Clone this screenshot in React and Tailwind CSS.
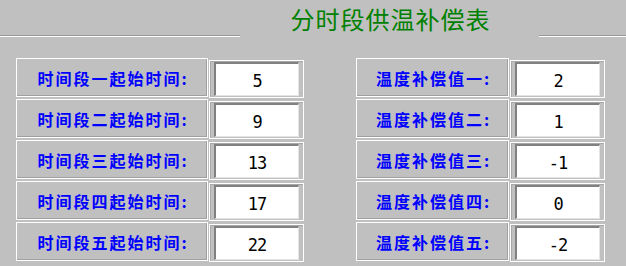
import React from 'react';

const font = { fontFamily: '"Noto Sans CJK SC", "Noto Sans", sans-serif' };

const timeRows = [
    { label: '时间段一起始时间:', value: '5' },
    { label: '时间段二起始时间:', value: '9' },
    { label: '时间段三起始时间:', value: '13' },
    { label: '时间段四起始时间:', value: '17' },
    { label: '时间段五起始时间:', value: '22' },
];

const tempRows = [
    { label: '温度补偿值一:', value: '2' },
    { label: '温度补偿值二:', value: '1' },
    { label: '温度补偿值三:', value: '-1' },
    { label: '温度补偿值四:', value: '0' },
    { label: '温度补偿值五:', value: '-2' },
];

const Row = ({ label, value, labelWidth }) => (
    <div className="flex items-start gap-[1px]">
        <div
            className={`${labelWidth} h-[39px] flex items-center justify-center pl-[2px] border border-white shadow-[inset_-1px_-1px_0_#a0a0a0] text-[16px] font-bold text-[#0000ff] tracking-[2px]`}
        >
            {label}
        </div>
        <div className="w-[95px] h-[38px] mt-[2px] border border-white shadow-[inset_1px_1px_0_#a8a8a8] pl-[4px] pr-[4px] pt-[1px] pb-[1px]">
            <div className="h-full bg-white border-t-2 border-l-2 border-t-[#808080] border-l-[#808080] border-b border-r border-b-[#e4e4e4] border-r-[#e4e4e4] flex items-center justify-center pt-[5px] font-['DejaVu_Sans_Mono',monospace] text-[17px] tracking-[-1px] text-black">
                {value}
            </div>
        </div>
    </div>
);

const App = () => {
    return (
        <div className="w-[626px] h-[266px] bg-[#c0c0c0] overflow-hidden" style={font}>
            <div className="flex items-end h-[37px]">
                <div className="w-[240px] h-[2px] border-t border-t-[#999999] border-b border-b-white" />
                <div className="flex-1 self-stretch flex items-start justify-center pt-[5px] pl-[2px] text-[24px] leading-[28px] text-[#008000] tracking-[1px]">
                    分时段供温补偿表
                </div>
                <div className="w-[87px] h-[2px] border-t border-t-[#999999] border-b border-b-white" />
            </div>

            <div className="flex mt-[21px] pl-[16px] gap-[52px]">
                <div className="flex flex-col gap-[1px]">
                    {timeRows.map((row, i) => (
                        <Row key={i} label={row.label} value={row.value} labelWidth="w-[192px]" />
                    ))}
                </div>
                <div className="flex flex-col gap-[1px]">
                    {tempRows.map((row, i) => (
                        <Row key={i} label={row.label} value={row.value} labelWidth="w-[153px]" />
                    ))}
                </div>
            </div>
        </div>
    );
};

export default App;
